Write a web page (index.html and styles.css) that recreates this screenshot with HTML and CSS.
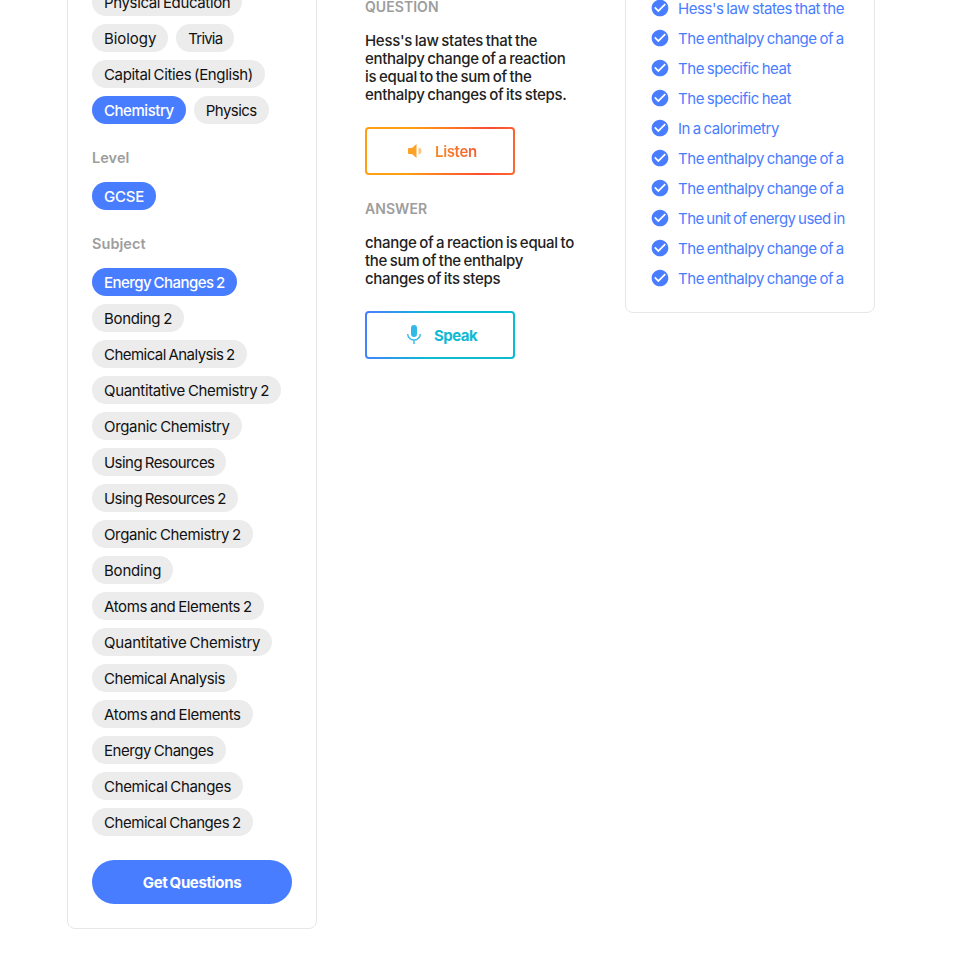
FILE: index.html
```html
<!DOCTYPE html>
<html lang="en">
<head>
<meta charset="utf-8">
<title>Questions</title>
<link rel="stylesheet" href="styles.css">
</head>
<body>
<svg class="sprite" aria-hidden="true">
  <symbol id="check" viewBox="0 0 24 24"><path d="M12 2C6.480 2 2 6.480 2 12s4.480 10 10 10 10-4.480 10-10S17.520 2 12 2zm-2 15l-5-5 1.410-1.410L10 14.170l7.590-7.590L19 8l-9 9z"/></symbol>
</svg>
<main class="page">
  <aside class="card filters">
    <div class="pills">
      <span class="pill snug">Physical Education</span>
      <span class="pill loose">Biology</span>
      <span class="pill narrow">Trivia</span>
      <span class="pill snug">Capital Cities (English)</span>
      <span class="pill active close">Chemistry</span>
      <span class="pill tight">Physics</span>
    </div>
    <h2 class="label">Level</h2>
    <div class="pills"><span class="pill active">GCSE</span></div>
    <h2 class="label">Subject</h2>
    <div class="pills column">
      <span class="pill active tight">Energy Changes 2</span>
      <span class="pill soft">Bonding 2</span>
      <span class="pill tight">Chemical Analysis 2</span>
      <span class="pill soft">Quantitative Chemistry 2</span>
      <span class="pill soft">Organic Chemistry</span>
      <span class="pill tight">Using Resources</span>
      <span class="pill tight">Using Resources 2</span>
      <span class="pill snug">Organic Chemistry 2</span>
      <span class="pill">Bonding</span>
      <span class="pill snug">Atoms and Elements 2</span>
      <span class="pill">Quantitative Chemistry</span>
      <span class="pill close">Chemical Analysis</span>
      <span class="pill soft">Atoms and Elements</span>
      <span class="pill close">Energy Changes</span>
      <span class="pill soft">Chemical Changes</span>
      <span class="pill close">Chemical Changes 2</span>
    </div>
    <button class="submit">Get Questions</button>
  </aside>
  <section class="quiz">
    <h2 class="heading">QUESTION</h2>
    <p class="copy">Hess's law states that the<br>enthalpy change of a reaction<br>is equal to the sum of the<br>enthalpy changes of its steps.</p>
    <button class="action listen">
      <svg class="speaker" viewBox="0 0 14 14"><path d="M1 4h3l4.500-4v14L4 10H1Q0 10 0 9V5Q0 4 1 4z"/><path class="wave" d="M10.500 3.500Q13.500 4 13.500 7T10.500 10.500z"/></svg>
      <span class="listen-text">Listen</span>
    </button>
    <h2 class="heading answer">ANSWER</h2>
    <p class="copy">change of a reaction is equal to<br>the sum of the enthalpy<br>changes of its steps</p>
    <button class="action speak">
      <svg class="mic" viewBox="0 0 14 19"><rect x="4" width="6" height="12" rx="3"/><path d="M.7 9a6.300 6 0 0 0 12.600 0M7 15v4" class="stand"/></svg>
      <span class="speak-text">Speak</span>
    </button>
  </section>
  <aside class="card history">
    <ul class="list">
      <li><svg><use href="#check"/></svg><span>Hess's law states that the</span></li>
      <li><svg><use href="#check"/></svg><span>The enthalpy change of a</span></li>
      <li><svg><use href="#check"/></svg><span>The specific heat</span></li>
      <li><svg><use href="#check"/></svg><span>The specific heat</span></li>
      <li><svg><use href="#check"/></svg><span>In a calorimetry</span></li>
      <li><svg><use href="#check"/></svg><span>The enthalpy change of a</span></li>
      <li><svg><use href="#check"/></svg><span>The enthalpy change of a</span></li>
      <li><svg><use href="#check"/></svg><span class="tight">The unit of energy used in</span></li>
      <li><svg><use href="#check"/></svg><span>The enthalpy change of a</span></li>
      <li><svg><use href="#check"/></svg><span>The enthalpy change of a</span></li>
    </ul>
  </aside>
</main>
</body>
</html>
```
FILE: styles.css
```css
* { box-sizing: border-box; }
html, body { margin: 0; height: 953px; overflow: hidden; background: #fff; }
body { font: 15px/18px Inter, "Liberation Sans", sans-serif; letter-spacing: -.2px; word-spacing: -1px; color: #111; }
h2, p, ul { margin: 0; padding: 0; }
button { font: inherit; letter-spacing: inherit; word-spacing: inherit; }
.sprite { display: none; }
.page { display: grid; grid-template-columns: 250px 212px 250px; column-gap: 48px; align-items: start; width: 808px; margin-left: 67px; }
.card { border: 1px solid #e7e7e7; border-radius: 8px; padding: 24px; }
.filters { height: 966px; margin-top: -37px; }
.pills { display: flex; flex-wrap: wrap; gap: 8px; }
.column { flex-direction: column; align-items: flex-start; }
.pill { height: 28px; padding: 1px 12px 0; border-radius: 14px; background: #ececec; line-height: 27px; white-space: nowrap; }
.pill.active { background: #497dff; color: #fff; font-weight: 500; }
.loose { letter-spacing: -.06px; }
.soft { letter-spacing: -.33px; }
.snug { letter-spacing: -.36px; }
.close { letter-spacing: -.45px; }
.tight { letter-spacing: -.54px; }
.narrow { letter-spacing: -.8px; }
.label, .heading { font-size: 14px; line-height: 18px; font-weight: 600; color: #9d9d9d; letter-spacing: .05px; }
.label { margin: 25px 0 15px; font-size: 14.500px; }
.submit { display: block; width: 200px; height: 44px; margin-top: 24px; padding: 2px 0 0; border: 0; border-radius: 22px; background: #497dff; color: #fff; font-weight: 700; letter-spacing: -.36px; }
.quiz { margin: -2px 0 0; }
.copy { margin-top: 16px; font-weight: 500; color: #222; letter-spacing: -.3px; white-space: nowrap; }
.action { display: flex; align-items: center; width: 150px; height: 48px; margin-top: 23px; padding: 0 0 0 41px; border: 2px solid transparent; border-radius: 4px; font-weight: 600; }
.action span { padding-top: 2px; }
.listen { background: linear-gradient(#fff, #fff) padding-box, linear-gradient(100deg, #fea012 30%, #fb4b34 80%, #fb6a30) border-box; }
.speak { background: linear-gradient(#fff, #fff) padding-box, linear-gradient(100deg, #4a7dff, #0abbd2 45%) border-box; padding-left: 40px; font-weight: 700; }
.speaker { width: 14px; height: 14px; margin-right: 13px; fill: #ffa126; }
.wave { opacity: .6; }
.mic { width: 14px; height: 19px; margin: -2px 13px 0 0; fill: #32b9e6; }
.stand { fill: none; stroke: #32b9e6; stroke-width: 1.400; }
.listen-text { background: linear-gradient(90deg, #f98a20, #f65c36); background-clip: text; color: transparent; letter-spacing: -.35px; }
.speak-text { color: #10bad5; letter-spacing: -.5px; }
.answer { margin-top: 25px; }
.history { height: 350px; margin-top: -37px; padding-top: 30px; }
.list { list-style: none; }
.list li { display: flex; align-items: center; height: 30px; color: #497dff; letter-spacing: -.45px; white-space: nowrap; }
.list svg { flex: none; width: 20px; height: 20px; margin: -2px 8px 0 0; fill: #497dff; }
```
